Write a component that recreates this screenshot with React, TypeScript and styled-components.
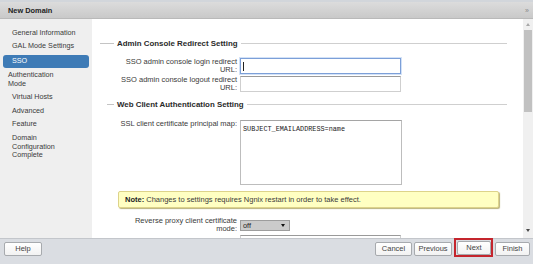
import React from "react";
import styled, { createGlobalStyle } from "styled-components";

const Global = createGlobalStyle`
  html, body { margin: 0; padding: 0; background: #fff; }
  body { font-family: "Liberation Sans", Arial, sans-serif; }
  #root { width: 533px; height: 264px; overflow: hidden; }
  * { box-sizing: border-box; }
`;

const Window = styled.div`
  width: 533px;
  height: 264px;
  display: flex;
  flex-direction: column;
  overflow: hidden;
  color: #333;
`;

const TitleBar = styled.div`
  flex: none;
  height: 19px;
  display: flex;
  align-items: center;
  justify-content: space-between;
  padding: 1px 5px 0 8px;
  background: linear-gradient(#dcdcdc, #c9c9c9);
  border-top: 2px solid #d2d6db;
  border-bottom: 1px solid #b9b9b9;
`;

const Title = styled.div`
  font-weight: bold;
  font-size: 7.4px;
  color: #222;
`;

const Collapse = styled.div`
  font-size: 7px;
  color: #8a8a8a;
  letter-spacing: -1px;
`;

const Body = styled.div`
  flex: none;
  height: 219px;
  display: flex;
`;

const Nav = styled.div`
  width: 92px;
  flex: none;
  background: #efefef;
  padding: 7px 3px 0 3px;
  display: flex;
  flex-direction: column;
`;

const NavItem = styled.div<{ $selected?: boolean; $inset?: number }>`
  font-size: 7.2px;
  line-height: 8.6px;
  white-space: pre-line;
  padding: ${(p) => (p.$selected ? "2.7px" : "2.5px")} 6px 2.5px
    ${(p) => p.$inset ?? 9}px;
  margin-top: ${(p) => (p.$selected ? "1.5px" : "0")};
  border-radius: 3px;
  color: ${(p) => (p.$selected ? "#fff" : "#3a3a3a")};
  background: ${(p) => (p.$selected ? "#3e7bb6" : "transparent")};
`;

const Content = styled.div`
  flex: 1;
  display: flex;
  background: #fff;
  min-width: 0;
`;

const Scroll = styled.div`
  flex: 1;
  overflow: hidden;
  padding: 20px 16px 0 8px;
  display: flex;
  flex-direction: column;
`;

const SectionHeader = styled.div<{ $lead: number; $top: number }>`
  display: flex;
  align-items: center;
  height: 10px;
  margin-top: ${(p) => p.$top}px;
  font-weight: bold;
  font-size: 7.9px;
  color: #2a2a2a;
  &::before {
    content: "";
    width: ${(p) => p.$lead}px;
    margin-left: ${(p) => 14 - p.$lead}px;
    height: 1px;
    background: #c4c4c4;
    margin-right: 3px;
  }
  &::after {
    content: "";
    flex: 1;
    height: 1px;
    background: #cfcfcf;
    margin-left: 3px;
  }
`;

const FormRow = styled.div<{ $top: number; $center?: boolean }>`
  display: grid;
  grid-template-columns: 120px auto;
  column-gap: 3px;
  padding-left: 17px;
  margin-top: ${(p) => p.$top}px;
  align-items: ${(p) => (p.$center ? "center" : "start")};
`;

const Label = styled.div<{ $lh?: number }>`
  font-size: 7.5px;
  line-height: ${(p) => p.$lh ?? 7.5}px;
  text-align: right;
  color: #3a3a3a;
`;

const FieldBox = styled.div<{ $focused?: boolean }>`
  width: 161px;
  height: 16px;
  border: 1px solid ${(p) => (p.$focused ? "#7c9fd8" : "#cfcfcf")};
  border-top-color: ${(p) => (p.$focused ? "#7c9fd8" : "#9a9a9a")};
  box-shadow: ${(p) => (p.$focused ? "0 0 0 1px #d3e2f7" : "none")};
  background: #fff;
  display: flex;
  align-items: center;
  padding-left: 2px;
`;

const Caret = styled.span`
  width: 1px;
  height: 9px;
  background: #222;
`;

const TextArea = styled.div`
  width: 162px;
  height: 65px;
  border: 1px solid #bdbdbd;
  border-top-color: #a5a5a5;
  padding: 4px 2px;
  font-family: "Liberation Mono", "Courier New", monospace;
  font-size: 6.8px;
  line-height: 8px;
  color: #222;
`;

const Note = styled.div`
  height: 17px;
  margin: 6px 8px 0 18px;
  background: #ffffc2;
  border: 1px solid #ddd38a;
  border-radius: 2px;
  box-shadow: 1px 1px 1px #b9b27a;
  padding-left: 6px;
  font-size: 7.5px;
  line-height: 15px;
  color: #3a3a3a;
  white-space: nowrap;
  b { color: #222; }
`;

const Select = styled.div`
  width: 50px;
  height: 11px;
  background: #cbcbcb;
  border: 1px solid #9d9d9d;
  display: flex;
  align-items: center;
  justify-content: space-between;
  padding: 0 4px 0 2px;
  font-size: 7.3px;
  color: #222;
`;

const SelectArrow = styled.span`
  width: 0;
  height: 0;
  border-left: 2.5px solid transparent;
  border-right: 2.5px solid transparent;
  border-top: 3px solid #111;
`;

const ScrollBar = styled.div`
  width: 10px;
  flex: none;
  background: #f0f0f0;
  display: flex;
  flex-direction: column;
  align-items: center;
  padding-top: 4px;
  padding-bottom: 6px;
`;

const Arrow = styled.span<{ $up?: boolean }>`
  width: 0;
  height: 0;
  border-left: 2.5px solid transparent;
  border-right: 2.5px solid transparent;
  ${(p) =>
    p.$up
      ? "border-bottom: 3px solid #a8a8a8;"
      : "border-top: 3px solid #4a4a4a; margin-top: auto;"}
`;

const Thumb = styled.div`
  width: 8px;
  height: 82px;
  margin-top: 4px;
  background: #c1c1c1;
`;

const Footer = styled.div`
  flex: 1;
  display: flex;
  justify-content: space-between;
  align-items: flex-start;
  padding: 3px 3px 0 4px;
  background: #dadde2;
  border-top: 1px solid #c3c6cb;
`;

const ButtonGroup = styled.div`
  display: flex;
  gap: 2px;
  align-items: flex-start;
`;

const Button = styled.button<{ $w: number }>`
  width: ${(p) => p.$w}px;
  height: 14px;
  padding: 0;
  border: 1px solid #a7aaae;
  border-radius: 2px;
  background: linear-gradient(#ffffff, #f2f2f2);
  font-family: "Liberation Sans", Arial, sans-serif;
  font-size: 7.5px;
  color: #444;
  line-height: 12px;
`;

const Highlight = styled.div`
  margin-top: -4px;
  border: 2px solid #c4252d;
  padding: 1px 0 0 1px;
  display: flex;
`;

const navItems: { label: string; selected?: boolean; inset?: number }[] = [
  { label: "General Information" },
  { label: "GAL Mode Settings" },
  { label: "SSO", selected: true },
  { label: "Authentication\nMode", inset: 5 },
  { label: "Virtual Hosts" },
  { label: "Advanced" },
  { label: "Feature" },
  { label: "Domain\nConfiguration\nComplete" },
];

export default function App() {
  return (
    <>
      <Global />
      <Window>
        <TitleBar>
          <Title>New Domain</Title>
          <Collapse>»</Collapse>
        </TitleBar>
        <Body>
          <Nav>
            {navItems.map((n) => (
              <NavItem key={n.label} $selected={n.selected} $inset={n.inset}>
                {n.label}
              </NavItem>
            ))}
          </Nav>
          <Content>
            <Scroll>
              <SectionHeader $lead={14} $top={0}>
                Admin Console Redirect Setting
              </SectionHeader>
              <FormRow $top={10}>
                <Label>SSO admin console login redirect URL:</Label>
                <FieldBox $focused>
                  <Caret />
                </FieldBox>
              </FormRow>
              <FormRow $top={2}>
                <Label>SSO admin console logout redirect URL:</Label>
                <FieldBox />
              </FormRow>
              <SectionHeader $lead={7} $top={8}>
                Web Client Authentication Setting
              </SectionHeader>
              <FormRow $top={11}>
                <Label>SSL client certificate principal map:</Label>
                <TextArea>SUBJECT_EMAILADDRESS=name</TextArea>
              </FormRow>
              <Note>
                <b>Note:</b> Changes to settings requires Ngnix restart in order to take effect.
              </Note>
              <FormRow $top={9} $center>
                <Label $lh={8.4}>Reverse proxy client certificate mode:</Label>
                <Select>
                  off
                  <SelectArrow />
                </Select>
              </FormRow>
              <FormRow $top={1}>
                <Label />
                <FieldBox />
              </FormRow>
            </Scroll>
            <ScrollBar>
              <Arrow $up />
              <Thumb />
              <Arrow />
            </ScrollBar>
          </Content>
        </Body>
        <Footer>
          <Button $w={38}>Help</Button>
          <ButtonGroup>
            <Button $w={37}>Cancel</Button>
            <Button $w={38}>Previous</Button>
            <Highlight>
              <Button $w={34}>Next</Button>
            </Highlight>
            <Button $w={35}>Finish</Button>
          </ButtonGroup>
        </Footer>
      </Window>
    </>
  );
}
